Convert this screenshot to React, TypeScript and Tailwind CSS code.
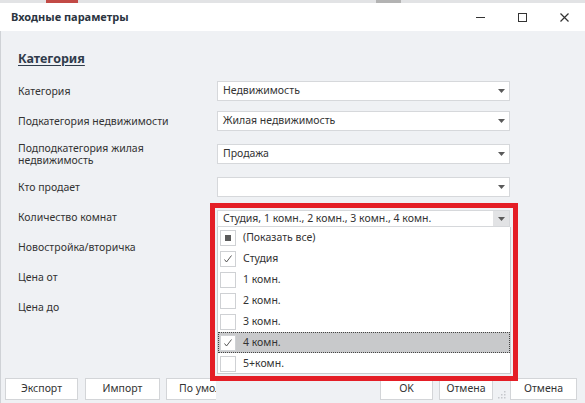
import React from 'react';

const ROWS = [
  { label: 'Категория', value: 'Недвижимость', h: 'h-[30px]', combo: true },
  { label: 'Подкатегория недвижимости', value: 'Жилая недвижимость', h: 'h-[30px]', combo: true },
  { label: 'Подподкатегория жилая\nнедвижимость', value: 'Продажа', h: 'h-[36px]', combo: true },
  { label: 'Кто продает', value: '', h: 'h-[30px]', combo: true },
  { label: 'Количество комнат', value: 'open', h: 'h-[30px]', combo: false },
  { label: 'Новостройка/вторичка', value: '', h: 'h-[30px]', combo: false },
  { label: 'Цена от', value: '', h: 'h-[30px]', combo: false },
  { label: 'Цена до', value: '', h: 'h-[30px]', combo: false },
];

const ITEMS = [
  { text: '(Показать все)', state: 'some' },
  { text: 'Студия', state: 'on' },
  { text: '1 комн.', state: 'off' },
  { text: '2 комн.', state: 'off' },
  { text: '3 комн.', state: 'off' },
  { text: '4 комн.', state: 'on', active: true },
  { text: '5+комн.', state: 'off' },
];

function Arrow() {
  return (
    <svg width="7" height="4" viewBox="0 0 7 4">
      <path d="M0 0h7L3.5 4z" fill="#5a5a5a" />
    </svg>
  );
}

function Combo({ value, h = 'h-5', open }: { value: string; h?: string; open?: boolean }) {
  return (
    <div className={`flex ${h} w-[293px] items-center border border-[#d6d8db] bg-white`}>
      <span className="flex-1 truncate pl-[5px] text-[10.5px] text-[#333]">{value}</span>
      <span className={`flex h-full w-4 items-center justify-center ${open ? 'bg-[#e2e3e5]' : ''}`}>
        <Arrow />
      </span>
    </div>
  );
}

function Check({ state }: { state: string }) {
  return (
    <span className="flex h-4 w-4 shrink-0 items-center justify-center border border-[#cfd1d4] bg-white">
      {state === 'some' && <span className="h-[6px] w-[6px] bg-[#5b5b5b]" />}
      {state === 'on' && (
        <svg width="12" height="12" viewBox="0 0 12 12">
          <path d="M2.5 6.5l2 2.5L9.5 2.5" fill="none" stroke="#444" strokeWidth="0.9" />
        </svg>
      )}
    </span>
  );
}

function Btn({ children, w }: { children: React.ReactNode; w: string }) {
  return (
    <div className={`flex h-[22px] ${w} items-center justify-center border border-[#d3d5d8] bg-white text-[10.5px] text-[#333]`}>
      {children}
    </div>
  );
}

export default function App() {
  return (
    <div className="flex h-[403px] w-[585px] flex-col overflow-hidden bg-[#eff1f4] font-['Segoe_UI','Noto_Sans',sans-serif] text-[10.5px] text-[#333]">
      {/* strip of the window behind */}
      <div className="flex h-[3px] shrink-0 bg-[#e2e3e5]">
        <span className="ml-[46px] w-[32px] bg-[#c24a46]" />
        <span className="ml-[298px] w-[25px] bg-[#b3b3b3]" />
      </div>

      {/* title bar */}
      <div className="flex h-[28px] shrink-0 items-center bg-white">
        <span className="pl-[11px] text-[11px] font-bold text-[#2b3440]">Входные параметры</span>
        <div className="ml-auto flex items-center">
          <span className="flex w-[42px] justify-center">
            <span className="h-px w-[9px] bg-[#333]" />
          </span>
          <span className="flex w-[42px] justify-center">
            <span className="h-[9px] w-[9px] border border-[#333]" />
          </span>
          <span className="flex w-[42px] justify-center">
            <svg width="9" height="9" viewBox="0 0 9 9">
              <path d="M0.5 0.5l8 8M8.5 0.5l-8 8" stroke="#333" strokeWidth="1.2" />
            </svg>
          </span>
        </div>
      </div>

      {/* body */}
      <div className="flex flex-1 flex-col border-l border-[#cfd2d6]">
        <div className="pl-[17px] pt-[20px] text-[12.5px] font-bold leading-4 text-[#2f3b4b] underline underline-offset-2">
          Категория
        </div>

        <div className="mt-[9px] grid grid-cols-[199px_293px] pl-[17px]">
          {ROWS.map((r) => (
            <React.Fragment key={r.label}>
              <div className={`flex ${r.h} items-center whitespace-pre-line leading-[12px]`}>{r.label}</div>
              <div className={`relative flex ${r.h} items-center`}>
                {r.value === 'open' && (
                  <div className="absolute left-[-7px] top-[1px] h-[178px] w-[308px] border-[5px] border-[#e41e26] p-[2px]">
                    <Combo value="Студия, 1 комн., 2 комн., 3 комн., 4 комн." h="h-[17px]" open />
                    <div className="h-[147px] overflow-hidden border border-t-0 border-[#c9cbce] bg-white">
                      {ITEMS.map((it) => (
                        <div
                          key={it.text}
                          className={`flex h-[21px] items-center gap-[7px] ${
                            it.active ? 'border border-dotted border-[#444] bg-[#c8c9cb] pl-px' : 'pl-[2px]'
                          }`}
                        >
                          <Check state={it.state} />
                          <span className="text-[10.5px] text-[#333]">{it.text}</span>
                        </div>
                      ))}
                    </div>
                  </div>
                )}
                {r.combo && <Combo value={r.value} />}
              </div>
            </React.Fragment>
          ))}
        </div>

        <div className="flex-1" />

        {/* buttons */}
        <div className="mb-[3px] flex items-center pl-[4px]">
          <Btn w="w-[73px]">Экспорт</Btn>
          <div className="ml-[7px]">
            <Btn w="w-[75px]">Импорт</Btn>
          </div>
          {/* partly hidden under the open list */}
          <div className="ml-[6px] flex h-[22px] w-[50px] items-center overflow-hidden whitespace-nowrap border border-r-0 border-[#d3d5d8] bg-white pl-[12px] text-[10.5px] text-[#333]">
            По умолчанию
          </div>
          <div className="ml-auto flex items-center">
            <Btn w="w-[53px]">OK</Btn>
            <div className="ml-[6px]">
              <Btn w="w-[54px]">Отмена</Btn>
            </div>
            <span className="flex w-[17px] items-end justify-center self-end pb-[1px]">
              <svg width="8" height="8" viewBox="0 0 8 8" fill="#c5c8cc">
                <rect x="6" y="0" width="1.5" height="1.5" />
                <rect x="3" y="3" width="1.5" height="1.5" />
                <rect x="6" y="3" width="1.5" height="1.5" />
                <rect x="0" y="6" width="1.5" height="1.5" />
                <rect x="3" y="6" width="1.5" height="1.5" />
                <rect x="6" y="6" width="1.5" height="1.5" />
              </svg>
            </span>
            <Btn w="w-[67px]">Отмена</Btn>
          </div>
          <div className="w-[8px]" />
        </div>
      </div>
    </div>
  );
}
